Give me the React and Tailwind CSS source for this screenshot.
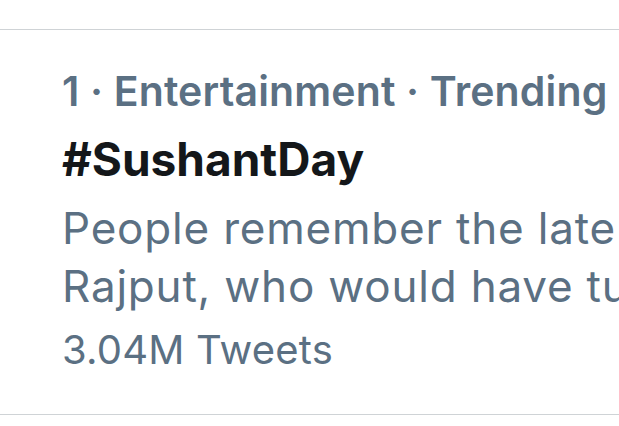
export default function App() {
  return (
    <div className="w-[619px] h-[426px] bg-white overflow-hidden" style={{ fontFamily: "Inter, 'Noto Sans', sans-serif" }}>
      <div className="h-[29px]" />
      <div className="h-px bg-[#cfd3d6]" />
      <div className="pl-[62px] pt-[37px] h-[384px] flex flex-col whitespace-nowrap overflow-hidden">
        <div className="text-[41px] leading-[48px] font-semibold text-[#5b7083] tracking-[0.15px]">1 · Entertainment · Trending</div>
        <div className="text-[46px] leading-[60px] mt-[14px] font-bold text-[#14171a]">#SushantDay</div>
        <div className="text-[44px] leading-[58px] mt-[10px] text-[#5b7083] tracking-[0.8px]">
          <div>People remember the late actor Sushant Singh</div>
          <div>Rajput, who would have turned 35 today</div>
        </div>
        <div className="text-[40px] leading-[56px] mt-[7px] text-[#5b7083] tracking-[0.2px]">3.04M Tweets</div>
      </div>
      <div className="h-px bg-[#cfd3d6]" />
    </div>
  );
}
